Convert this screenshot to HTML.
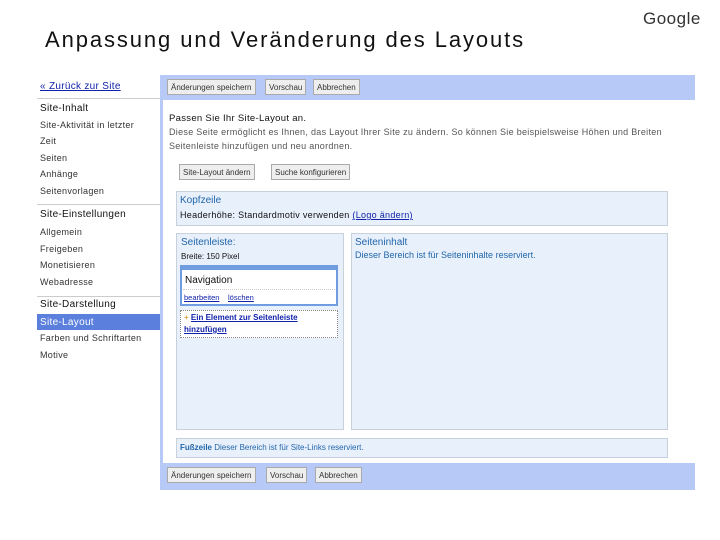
<!DOCTYPE html>
<html><head><meta charset="utf-8"><style>
*{margin:0;padding:0;box-sizing:border-box}
body{width:720px;height:540px;background:#fff;position:relative;font-family:"Liberation Sans",sans-serif;overflow:hidden}
.a{position:absolute;white-space:nowrap}
.t{font-size:9px;color:#333;letter-spacing:0.3px}
.btn{position:absolute;height:16px;border:1px solid #aaa;background:#eee;font-size:8px;color:#333;padding:2px 3px;line-height:11px;white-space:nowrap}
.box{position:absolute;background:#e8f0fb;border:1px solid #c8d0da}
.bl{color:#2266aa}
.lk{color:#1122aa;text-decoration:underline}
</style></head><body>
<div class="a" style="left:45px;top:27px;font-size:22px;letter-spacing:1.9px;color:#111">Anpassung und Veränderung des Layouts</div>
<div class="a" style="left:643px;top:9px;font-size:17px;letter-spacing:0.5px;color:#333">Google</div>

<div class="a t lk" style="left:40px;top:81px;font-size:10px">« Zurück zur Site</div>
<div class="a" style="left:37px;top:98px;width:123px;border-top:1px solid #ccc"></div>
<div class="a t" style="left:40px;top:103px;font-size:10px;color:#111">Site-Inhalt</div>
<div class="a t" style="left:40px;top:120px">Site-Aktivität in letzter</div>
<div class="a t" style="left:40px;top:136px">Zeit</div>
<div class="a t" style="left:40px;top:153px">Seiten</div>
<div class="a t" style="left:40px;top:169px">Anhänge</div>
<div class="a t" style="left:40px;top:186px">Seitenvorlagen</div>
<div class="a" style="left:37px;top:204px;width:123px;border-top:1px solid #ccc"></div>
<div class="a t" style="left:40px;top:209px;font-size:10px;color:#111">Site-Einstellungen</div>
<div class="a t" style="left:40px;top:227px">Allgemein</div>
<div class="a t" style="left:40px;top:244px">Freigeben</div>
<div class="a t" style="left:40px;top:260px">Monetisieren</div>
<div class="a t" style="left:40px;top:277px">Webadresse</div>
<div class="a" style="left:37px;top:296px;width:123px;border-top:1px solid #ccc"></div>
<div class="a t" style="left:40px;top:299px;font-size:10px;color:#111">Site-Darstellung</div>
<div class="a" style="left:37px;top:314px;width:123px;height:16px;background:#5b7fdc"></div>
<div class="a t" style="left:40px;top:317px;font-size:10px;color:#fff">Site-Layout</div>
<div class="a t" style="left:40px;top:333px">Farben und Schriftarten</div>
<div class="a t" style="left:40px;top:350px">Motive</div>

<div class="a" style="left:160px;top:75px;width:535px;height:415px;background:#b7c9f7"></div>
<div class="a" style="left:163px;top:100px;width:532px;height:363px;background:#fff"></div>
<div class="btn" style="left:167px;top:79px">Änderungen speichern</div>
<div class="btn" style="left:265px;top:79px">Vorschau</div>
<div class="btn" style="left:313px;top:79px">Abbrechen</div>

<div class="a" style="left:169px;top:113px;font-size:9.5px;color:#111;letter-spacing:0.3px">Passen Sie Ihr Site-Layout an.</div>
<div class="a t" style="left:169px;top:127px;color:#555">Diese Seite ermöglicht es Ihnen, das Layout Ihrer Site zu ändern. So können Sie beispielsweise Höhen und Breiten</div>
<div class="a t" style="left:169px;top:141px;color:#555">Seitenleiste hinzufügen und neu anordnen.</div>
<div class="btn" style="left:179px;top:164px">Site-Layout ändern</div>
<div class="btn" style="left:271px;top:164px">Suche konfigurieren</div>

<div class="box" style="left:176px;top:191px;width:492px;height:35px"></div>
<div class="a bl" style="left:180px;top:195px;font-size:10px">Kopfzeile</div>
<div class="a t" style="left:180px;top:210px;color:#111">Headerhöhe: Standardmotiv verwenden <span class="lk">(Logo ändern)</span></div>

<div class="box" style="left:176px;top:233px;width:168px;height:197px"></div>
<div class="a bl" style="left:181px;top:237px;font-size:10px">Seitenleiste:</div>
<div class="a" style="left:181px;top:252px;font-size:8px;color:#111">Breite: 150 Pixel</div>
<div class="a" style="left:180px;top:265px;width:158px;height:41px;background:#fff;border:2px solid #6f9de0;border-top-width:5px"></div>
<div class="a" style="left:185px;top:275px;font-size:10px;color:#111">Navigation</div>
<div class="a" style="left:183px;top:289px;width:152px;border-top:1px dotted #ccc"></div>
<div class="a lk" style="left:184px;top:293px;font-size:7.5px">bearbeiten</div>
<div class="a lk" style="left:228px;top:293px;font-size:7.5px">löschen</div>
<div class="a" style="left:180px;top:310px;width:158px;height:28px;background:#fff;border:1px dotted #888"></div>
<div class="a" style="left:184px;top:313px;font-size:8px;color:#c80">+ <span class="lk" style="font-weight:bold">Ein Element zur Seitenleiste</span></div>
<div class="a lk" style="left:184px;top:325px;font-size:8px;font-weight:bold">hinzufügen</div>

<div class="box" style="left:351px;top:233px;width:317px;height:197px"></div>
<div class="a bl" style="left:355px;top:237px;font-size:10px">Seiteninhalt</div>
<div class="a bl" style="left:355px;top:250px;font-size:9px">Dieser Bereich ist für Seiteninhalte reserviert.</div>

<div class="box" style="left:176px;top:438px;width:492px;height:20px"></div>
<div class="a bl" style="left:180px;top:443px;font-size:8px"><b>Fußzeile</b> Dieser Bereich ist für Site-Links reserviert.</div>

<div class="btn" style="left:167px;top:467px">Änderungen speichern</div>
<div class="btn" style="left:266px;top:467px">Vorschau</div>
<div class="btn" style="left:315px;top:467px">Abbrechen</div>
</body></html>
